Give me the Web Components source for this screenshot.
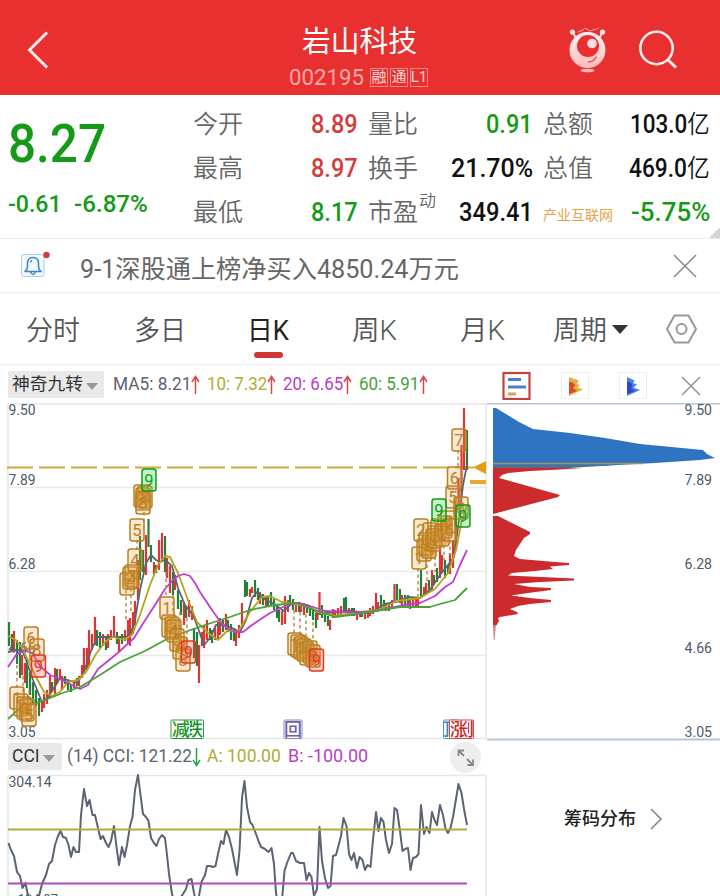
<!DOCTYPE html>
<html lang="zh-CN">
<head>
<meta charset="utf-8">
<title>岩山科技 002195</title>
<style>
  body {
    margin: 0;
    width: 720px;
    height: 896px;
    overflow: hidden;
    background: #fff;
    color: #666;
    font-family: Roboto, "Noto Sans CJK SC", sans-serif;
  }
</style>
</head>
<body>
<stock-page></stock-page>

<script>
class FitText extends HTMLElement {
  constructor() {
    super();
    this.attachShadow({ mode: "open" });
  }

  connectedCallback() {
    const width = Number(this.getAttribute("w"));
    this.shadowRoot.innerHTML = `
      <style>
        :host { display: block; width: ${width}px; white-space: nowrap; flex: none; }
        span { display: inline-block; transform-origin: 0 50%; }
      </style>
      <span><slot></slot></span>
    `;
    const span = this.shadowRoot.querySelector("span");
    span.style.transform = `scaleX(${width / span.offsetWidth})`;
  }
}
customElements.define("fit-text", FitText);

// Red title bar
class StockHeader extends HTMLElement {
  constructor() {
    super();
    this.attachShadow({ mode: "open" });
  }

  connectedCallback() {
    this.shadowRoot.innerHTML = `
      <style>
        :host {
          display: grid;
          grid-template-columns: 289px 139px 1fr;
          height: 95px;
          background: #e93030;
          color: #fff;
        }
        .back { padding: 30px 0 0 26px; }
        .title { padding-top: 21px; }
        .name { font-size: 29px; line-height: 42px; padding-left: 13px; }
        .code { display: flex; align-items: center; gap: 2px; height: 28px; font-size: 22.5px; color: #ffaaa6; }
        .code fit-text { margin-right: 4px; }
        .tag {
          box-sizing: border-box;
          width: 18px;
          height: 19px;
          border: 1px solid #f58a88;
          color: #ffd9d8;
          font-size: 15px;
          line-height: 17px;
          display: flex;
          justify-content: center;
        }
        .tools { display: flex; padding: 25px 0 0 140px; gap: 31px; }
        svg { display: block; fill: none; }
      </style>
      <div class="back">
        <svg width="24" height="40"><path d="M21 2.500L3.500 20L21 37.500" stroke="#ffecec" stroke-width="3"/></svg>
      </div>
      <div class="title">
        <div class="name"><fit-text w="115">岩山科技</fit-text></div>
        <div class="code">
          <fit-text w="75">002195</fit-text>
          <span class="tag">融</span><span class="tag">通</span><span class="tag">L1</span>
        </div>
      </div>
      <div class="tools">
        <svg width="40" height="49">
          <defs>
            <linearGradient id="ball" x1="0" y1="0" x2="0" y2="1">
              <stop offset="0" stop-color="#fff4f4"/><stop offset="1" stop-color="#ffb9bb"/>
            </linearGradient>
          </defs>
          <path d="M4.500 7L8.500 14M34.500 7L31 14" stroke="#ffdede" stroke-width="2"/>
          <circle cx="4.500" cy="7" r="2.600" fill="#ffe6e6"/><circle cx="34.500" cy="7" r="2.600" fill="#ffe6e6"/>
          <path d="M10 7L15 5L17 3L22 6L31 3" stroke="#ffaaaa"/>
          <circle cx="19.500" cy="25" r="18" fill="url(#ball)"/>
          <circle cx="20" cy="21" r="11" fill="#e93030"/>
          <circle cx="24" cy="18.500" r="4.800" fill="#ffdede"/>
          <path d="M20 37Q26 37 28.500 31.500" stroke="#e85050" stroke-width="1.300"/>
          <ellipse cx="19.500" cy="45.500" rx="7" ry="1.700" fill="#ffb8b8"/>
        </svg>
        <svg width="40" height="46">
          <circle cx="17.500" cy="23" r="16.200" stroke="#ffecec" stroke-width="2.600"/>
          <path d="M28.500 34.500L37 42.500" stroke="#ffecec" stroke-width="3"/>
        </svg>
      </div>
    `;
  }
}
customElements.define("stock-header", StockHeader);

// One label / value pair of the quote table
class QuoteItem extends HTMLElement {
  constructor() {
    super();
    this.attachShadow({ mode: "open" });
  }

  connectedCallback() {
    const sup = this.getAttribute("sup") || "";
    const small = this.hasAttribute("small");
    this.shadowRoot.innerHTML = `
      <style>
        :host { display: flex; justify-content: space-between; height: 44px; line-height: 44px; }
        .label { font-size: 25px; font-weight: 350; color: #666; white-space: nowrap; display: flex; }
        .label.small { font-size: 14px; font-weight: 400; color: #e8a048; padding-top: 2px; }
        sup { font-size: 17px; line-height: 20px; margin-left: 1px; }
        .value { font-size: 25px; font-weight: 500; color: ${this.getAttribute("color") || "#111"}; }
      </style>
      <div class="label ${small ? "small" : ""}">${this.getAttribute("label")}${sup ? `<sup>${sup}</sup>` : ""}</div>
      <fit-text class="value" w="${this.getAttribute("w")}"><slot></slot></fit-text>
    `;
  }
}
customElements.define("quote-item", QuoteItem);

class QuoteBoard extends HTMLElement {
  constructor() {
    super();
    this.attachShadow({ mode: "open" });
  }

  connectedCallback() {
    this.shadowRoot.innerHTML = `
      <style>
        :host {
          display: grid;
          grid-template-columns: 175px 165px 165px 167px;
          column-gap: 10px;
          box-sizing: border-box;
          height: 144px;
          padding: 7px 0 0 8px;
          border-bottom: 1px solid #e9e9e9;
          background: linear-gradient(135deg, transparent 50%, #d4d4d4 50%) 100% 100% / 11px 11px no-repeat;
        }
        .last { color: #159a18; font-weight: 500; }
        .price { font-size: 54px; line-height: 60px; padding-top: 12px; }
        .change { display: flex; gap: 12px; font-size: 23.5px; line-height: 30px; padding-top: 15px; }
        .column { padding-top: 1px; }
      </style>
      <div class="last">
        <div class="price"><fit-text w="98">8.27</fit-text></div>
        <div class="change"><fit-text w="54">-0.61</fit-text><fit-text w="74">-6.87%</fit-text></div>
      </div>
      <div class="column">
        <quote-item label="今开" w="47" color="#d43c3c">8.89</quote-item>
        <quote-item label="最高" w="47" color="#d43c3c">8.97</quote-item>
        <quote-item label="最低" w="47" color="#159a18">8.17</quote-item>
      </div>
      <div class="column">
        <quote-item label="量比" w="47" color="#159a18">0.91</quote-item>
        <quote-item label="换手" w="82">21.70%</quote-item>
        <quote-item label="市盈" sup="动" w="74">349.41</quote-item>
      </div>
      <div class="column">
        <quote-item label="总额" w="80">103.0<span style="font-weight:350">亿</span></quote-item>
        <quote-item label="总值" w="81">469.0<span style="font-weight:350">亿</span></quote-item>
        <quote-item label="产业互联网" small w="79" color="#159a18">-5.75%</quote-item>
      </div>
    `;
  }
}
customElements.define("quote-board", QuoteBoard);

// Dismissable news line
class NewsBar extends HTMLElement {
  constructor() {
    super();
    this.attachShadow({ mode: "open" });
  }

  connectedCallback() {
    this.shadowRoot.innerHTML = `
      <style>
        :host {
          display: flex;
          box-sizing: border-box;
          height: 54px;
          padding-left: 20px;
          align-items: center;
          border-bottom: 1px solid #eee;
          font-size: 25px;
        }
        svg { display: block; fill: none; flex: none; }
        fit-text { margin: 2px 214px 0 28px; color: #666; }
      </style>
      <svg width="32" height="30" viewBox="0 1 32 30">
        <rect x="1.500" y="4.500" width="22.500" height="22" rx="2.500" fill="#f3faff" stroke="#a9cfee"/>
        <path d="M5 21.500Q7.500 20 7.500 16V13.500Q7.500 7.500 13 7.500Q18.500 7.500 18.500 13.500V16Q18.500 20 21 21.500ZM10.500 22Q13 27 15.500 22M10.500 12.500Q11 10.500 12 10.500" stroke="#3d85c4" stroke-width="1.500" stroke-linejoin="round"/>
        <circle cx="26.500" cy="5" r="3.200" fill="#d63a3a"/>
      </svg>
      <fit-text w="379"><slot></slot></fit-text>
      <svg width="24" height="24"><path d="M1 1L23 23M23 1L1 23" stroke="#888" stroke-width="1.500"/></svg>
    `;
  }
}
customElements.define("news-bar", NewsBar);

class PeriodTabs extends HTMLElement {
  constructor() {
    super();
    this.attachShadow({ mode: "open" });
  }

  connectedCallback() {
    const tabs = [["分时", 54], ["多日", 52], ["日K", 42], ["周K", 45], ["月K", 45], ["周期", 54]];
    this.shadowRoot.innerHTML = `
      <style>
        :host {
          display: grid;
          grid-template-columns: 108px 113px 105px 108px 93px 113px 32px;
          box-sizing: border-box;
          height: 72px;
          padding-left: 26px;
          border-bottom: 1px solid #eee;
        }
        .tab { display: flex; gap: 5px; padding-top: 18px; font-size: 27px; line-height: 40px; font-weight: 350; color: #555; }
        .tab.on { flex-direction: column; gap: 0; color: #222; font-weight: 400; }
        .tab.on::after { content: ""; width: 29px; height: 6px; border-radius: 3px; margin: 1px 0 0 7px; background: #d23535; }
        .caret { border: 8px solid transparent; border-top: 9px solid #333; border-bottom: 0; height: 0; margin-top: 14px; }
        svg { display: block; fill: none; margin-top: 20px; }
      </style>
      ${tabs.map(([name, w]) => `
        <div class="tab ${name === "日K" ? "on" : ""}">
          <fit-text w="${w}">${name}</fit-text>${name === "周期" ? `<i class="caret"></i>` : ""}
        </div>`).join("")}
      <svg width="32" height="32" stroke="#999" stroke-width="2">
        <path d="M8.500 2.500H22.500L30 16L22.500 29.500H8.500L1 16Z" stroke-linejoin="round"/>
        <circle cx="15.500" cy="16" r="5"/>
      </svg>
    `;
  }
}
customElements.define("period-tabs", PeriodTabs);

// Indicator picker with the current readings next to it
class IndicatorBar extends HTMLElement {
  constructor() {
    super();
    this.attachShadow({ mode: "open" });
  }

  connectedCallback() {
    this.shadowRoot.innerHTML = `
      <style>
        :host { display: flex; align-items: flex-start; box-sizing: border-box; padding: 6px 0 0 8px; font-size: 17.500px; line-height: 27px; }
        .pick {
          display: flex;
          box-sizing: border-box;
          width: ${this.getAttribute("pick-width")}px;
          height: 27px;
          padding-left: 4px;
          gap: 3px;
          background: #e9e9e9;
          border-radius: 2px;
          color: #333;
          flex: none;
        }
        .pick i { border: 6px solid transparent; border-top: 7px solid #999; border-bottom: 0; height: 0; margin-top: 12px; }
        ::slotted(*) { flex: none; }
      </style>
      <div class="pick">
        <fit-text w="${this.getAttribute("name-width")}">${this.getAttribute("name")}</fit-text><i></i>
      </div>
      <slot></slot>
    `;
  }
}
customElements.define("indicator-bar", IndicatorBar);

// Up or down arrow behind a reading
class TrendArrow extends HTMLElement {
  constructor() {
    super();
    this.attachShadow({ mode: "open" });
  }

  connectedCallback() {
    const down = this.hasAttribute("down");
    this.shadowRoot.innerHTML = `
      <style>
        :host { display: block; width: 9px; height: 20px; padding-top: 4px; }
        svg { display: block; fill: none; transform: ${down ? "rotate(180deg)" : "none"}; }
      </style>
      <svg width="9" height="20" stroke="${down ? "#27a35c" : "#d44"}" stroke-width="1.500"><path d="M4.500 19V1.500M1 7L4.500 1.500L8 7"/></svg>
    `;
  }
}
customElements.define("trend-arrow", TrendArrow);

// x, top, bottom and direction (r = up, g = down) of each bar
const CANDLES = `
9 622 646 g,12 634 650 g,14 631 650 r,17 640 664 g,20 642 678 g,22 655 675 r,25 663 683 r,27 660 688 g,
30 672 695 g,33 682 704 g,36 690 706 g,39 698 716 g,42 702 712 r,44 694 708 r,47 690 704 r,50 676 698 r,
52 682 692 g,55 668 694 r,57 669 684 g,60 669 678 r,62 676 690 r,65 676 684 g,68 680 690 g,71 684 692 g,
74 680 688 r,77 678 686 g,79 676 686 r,82 665 678 r,84 648 674 r,87 648 670 r,89 630 666 r,92 634 650 r,
95 617 645 r,97 630 646 g,100 632 648 g,103 634 646 r,106 637 650 g,108 634 648 r,111 630 640 r,114 616 637 r,
117 632 644 g,119 638 652 r,122 634 644 g,125 630 641 r,128 620 644 r,130 618 646 r,133 612 634 r,135 601 626 r,
138 560 600 r,140 536 580 g,143 550 572 g,146 535 575 r,148.5 519 547 g,151 545 562 g,154 562 575 r,156 565 573 g,
159 540 570 r,162 533 562 r,165 536 572 g,167 558 578 r,170 566 593 r,173 572 595 g,175 575 590 r,178 590 609 g,
181 600 615 g,184 602 625 r,186 606 618 g,189 600 617 r,192 606 620 r,194 628 658 g,197 632 666 g,199 645 683 r,
202 632 646 r,204 625 648 r,207 620 640 r,210 628 640 g,212 630 643 g,215 628 640 r,218 622 640 r,220 618 635 r,
223 620 632 g,226 614 630 r,228 620 632 g,231 624 640 g,234 628 641 g,236 630 646 r,239 625 638 r,242 603 625 r,
245 580 597 g,247 582 596 g,250 589 597 r,252 587 593 r,255 580 597 g,258 588 600 g,260 592 604 r,263 594 605 g,
266 596 606 r,268 597 607 g,271 592 605 g,274 599 610 g,277 605 618 g,279 610 622 g,282 611 625 r,285 596 624 r,
288 600 612 r,290 595 606 g,293 599 610 g,296 603 612 r,299 602 612 g,301 604 612 r,304 603 615 r,307 604 613 g,
310 606 616 g,313 610 620 g,316 613 628 g,317.500 612 620 r,319.500 592 615 r,322 605 618 g,325 611 622 g,328 616 626 g,
330 620 630 r,333 609 618 r,335 610 618 r,338 608 616 r,341 606 615 r,344 598 612 g,346 597 612 g,349 608 614 r,
352 608 616 g,354 608 616 g,357 612 620 r,360 611 617 r,362 611 617 g,365 613 619 r,368 612 618 r,370 608 616 r,
373 606 614 r,376 593 610 r,378 602 610 r,381 595 608 g,384 600 608 g,386 603 611 r,389 603 611 g,392 600 608 r,
394.500 584 602 r,397 584 600 g,400 589 603 g,402 595 606 r,405 595 604 g,408 595 607 g,410 600 609 r,413 597 608 r,
416 597 606 r,418 597 606 r,421 570 596 g,424 587 596 r,426 583 594 r,429 580 592 g,432 570 590 r,434 575 585 g,
437 568 582 g,440 548 578 r,442 555 572 r,445 560 578 g,448 565 573 g,450 553 574 r,453 540 568 r,455.500 500 550 r,
458.500 478 510 r,461.500 445 492 r,464 408 470 r,467 430 470 g`;

const AVERAGES = [
  ["#5c6470", "8,652 17,650 22,650 26,660 33,680 42,702 48,697 54,688 60,678 68,680 77,683 84,672 92,648 98,637 103,637 112,637 122,637 130,636 135,620 140,590 146,563 151,555 156,560 160,562 165,560 172,566 178,588 185,605 193,615 198,628 204,645 210,638 216,625 224,625 232,628 240,632 246,620 252,598 257,592 266,600 274,604 284,611 292,603 300,603 310,608 320,614 335,612 350,611 370,613 385,604 400,601 408,597 420,598 430,590 440,575 448,565 454,557 459,520 463,485 467,465"],
  ["#b3a51e", "8,636 16,640 22,648 28,660 35,675 44,692 52,696 60,692 68,682 78,680 86,672 96,654 106,641 113,637 124,640 132,635 140,615 150,585 158,565 165,556 170,557 178,573 188,600 197,622 208,633 218,640 228,630 238,632 250,612 262,597 270,596 282,602 300,605 310,607 318,612 335,616 360,612 378,610 397,601 420,598 435,589 448,573 456,550 462,520 467,505"],
  ["#bf3fd0", "8,667 16,655 25,650 33,654 40,666 50,675 60,679 70,684 80,689 88,685 98,669 108,661 120,651 134,638 144,622 155,605 165,589 172,581 178,576 184,574 190,576 195,583 200,592 212,610 222,624 229,629 236,632 243,632 252,625 270,613 285,606 297,603 310,606 325,611 345,612 370,612 390,608 405,605 420,603 435,596 445,587 453,582 460,565 467,550"],
  ["#46a436", "8,719 20,708 40,702 60,694 80,687 100,675 120,662 145,651 167,639 185,632 205,625 230,617 250,610 275,605 295,603 315,610 335,617 350,615 375,611 400,607 430,607 440,604 455,600 467,588"]
];

// Centre and digit of each count mark; c picks the colour
const MARKS = [
  [31, 638, 6], [37, 650, 8], [17, 698, 1], [21, 705, 2], [24, 708, 3], [27, 710, 4], [29, 715, 5], [38.5, 666, 9, "red"],
  [137, 530, 5], [127, 584, 1], [130, 578, 2], [132, 576, 3], [135, 560, 4], [141, 496, 6], [143, 499, 7], [145, 497, 8], [143, 503, 8], [149, 480, 9, "green"],
  [167, 608, 1], [169, 626, 2], [172, 628, 3], [174, 631, 4], [177, 640, 5], [180, 648, 6], [183, 660, 8], [188.5, 652, 9, "red"],
  [295, 644, 1], [298, 646, 2], [301, 648, 3], [304, 650, 4], [307, 654, 5], [310, 652, 6], [313, 656, 8], [316.5, 660, 9, "red"],
  [419, 558, 1], [421, 530, 2], [424, 550, 2], [426, 544, 3], [429, 547, 4], [430, 534, 5], [433, 540, 6], [435, 537, 7],
  [438, 530, 8], [442, 535, 3], [445, 527, 4], [448, 522, 8], [449, 530, 6], [453, 497, 5], [454.5, 478, 6], [459, 440, 7],
  [461, 508, 8], [439, 510, 9, "green"], [463, 516, 9, "green"]
];

const MARK_COLORS = {
  tan: ["#b98022", "rgba(226,160,70,.25)"],
  red: ["#e2391f", "rgba(245,90,70,.28)"],
  green: ["#119a18", "rgba(60,215,75,.3)"]
};

// [x, y, width, height] of the patches where many marks pile up
const PILES = [
  [18, 700, 14, 16], [137, 489, 13, 16], [125, 570, 12, 16], [165, 619, 14, 16], [172, 636, 14, 14],
  [294, 638, 14, 16], [304, 644, 12, 18], [420, 540, 16, 18], [428, 528, 20, 18], [442, 518, 11, 16]
];

// [x, from, to] of the dotted stems
const STEMS = [
  [17, 665, 688], [23, 676, 696], [29, 690, 700], [126, 590, 622], [131, 588, 612], [137, 540, 550], [144, 512, 530],
  [166, 572, 597], [173, 595, 616], [180, 612, 636], [187, 618, 640], [294, 610, 634], [300, 612, 636], [306, 614, 640],
  [313, 622, 644], [418, 568, 598], [427, 558, 585], [435, 550, 572], [444, 545, 560], [450, 540, 555], [458, 450, 468]
];

class KlineChart extends HTMLElement {
  constructor() {
    super();
    this.attachShadow({ mode: "open" });
  }

  connectedCallback() {
    const candles = CANDLES.split(",").map(row => {
      const [x, top, bottom, dir] = row.trim().split(" ");
      return `<path d="M${x} ${top}V${bottom}" stroke="${dir === "r" ? "#e03434" : "#23803a"}"/>`;
    }).join("");
    const lines = AVERAGES.map(([color, points]) => `<polyline points="${points}" stroke="${color}"/>`).join("");
    const marks = MARKS.map(([x, y, digit, c = "tan"]) => {
      const [stroke, fill] = MARK_COLORS[c];
      return `<rect x="${x - 7}" y="${y - 11}" width="14" height="22" rx="2.500" fill="${fill}" stroke="${stroke}" stroke-width="1.500"/>
        <text x="${x}" y="${y + 6}" font-size="16.500" text-anchor="middle" fill="${stroke}">${digit}</text>`;
    }).join("");
    const piles = PILES.map(([x, y, w, h]) => `<rect x="${x}" y="${y}" width="${w}" height="${h}" rx="4"/>`).join("");
    const stems = STEMS.map(([x, from, to]) => `<path d="M${x} ${from}V${to}"/>`).join("");
    const scale = [["9.50", 415], ["7.89", 485], ["6.28", 569], ["4.66", 653], ["3.05", 737]];

    this.shadowRoot.innerHTML = `
      <style>
        :host { display: block; }
        svg { display: block; overflow: visible; }
        .axis { font-size: 14.500px; fill: #4b5b6b; }
        .event { font-size: 18px; font-weight: 500; }
      </style>
      <svg width="487" height="336" viewBox="0 403 487 336" fill="none">
        <path d="M8 487.500H486M8 571.500H486M8 655.500H486" stroke="#e9e9e9" stroke-width="1.500"/>
        <path d="M8 404H486M8 403V739M486 403V739M8 738.500H486" stroke="#e4e6e8" stroke-width="1.500"/>
        ${scale.map(([t, y]) => `<text class="axis" x="8.500" y="${y}" textLength="27" lengthAdjust="spacingAndGlyphs">${t}</text>`).join("")}
        <path d="M7 467.500H474" stroke="#d6a73c" stroke-width="2" stroke-dasharray="26 6"/>
        <g stroke-width="2.200">${candles}</g>
        <g stroke-width="1.800" stroke-linejoin="round">${lines}</g>
        <g stroke="#ba8c48" stroke-width="1.500" stroke-dasharray="3.500 3">${stems}</g>
        <g fill="#cf9a3c" fill-opacity=".65">${piles}</g>
        ${marks}
        <path d="M473 467.500L486 461V474Z" fill="#e69b12"/>
        <path d="M470 482H486" stroke="#e9a92a" stroke-width="4"/>
        <clipPath id="fall"><rect x="190" y="720" width="13" height="19"/></clipPath>
        <clipPath id="top"><rect x="444" y="720" width="5" height="19"/></clipPath>
        <clipPath id="rise"><rect x="468" y="720" width="5.500" height="19"/></clipPath>
        <rect x="171" y="720" width="32.500" height="18.500" rx="1" fill="#fff" stroke="#2a9a3a"/>
        <text class="event" x="172" y="736" fill="#189322">减</text>
        <text class="event" x="185" y="736" fill="#189322" clip-path="url(#fall)">跌</text>
        <rect x="284" y="720" width="18" height="18.500" rx="1" fill="#fff" stroke="#8d84ba"/>
        <text class="event" x="284" y="736" fill="#6b60a5">回</text>
        <rect x="443.500" y="720" width="15" height="18.500" rx="1" fill="#fff" stroke="#5794cc"/>
        <text class="event" x="443" y="736" fill="#3c83c4" clip-path="url(#top)">顶</text>
        <rect x="449.500" y="720" width="24" height="18.500" rx="1" fill="#fff" stroke="#d34a4a"/>
        <text class="event" x="450" y="736" fill="#cf2525">涨</text>
        <text class="event" x="456" y="736" fill="#cf2525" clip-path="url(#rise)">到</text>
      </svg>
    `;
  }
}
customElements.define("kline-chart", KlineChart);

class CciChart extends HTMLElement {
  constructor() {
    super();
    this.attachShadow({ mode: "open" });
  }

  connectedCallback() {
    const points = `8.500,843 11,850 14,856 17,872 20,876 22.500,888 25.500,883 28,896 32,905 38,900 42,884 46,875 49,864 52,861 55,845
      58,836 60.500,831 63,837 66,838 68.500,845 71,857 73.500,847 76,852 79,852 81,815 84,789 87,806 89.500,800 92.500,815 95,815
      98,828 100.500,839 103,836 106,843 108.500,847 111,841 114,826 116.500,847 119,865 122,847 124.500,857 127,845 130,826 132.500,817
      135,790 138,775 140,791 143,814 146,817 148.500,821 151,838 154,843 156.500,846 159,839 162,835 165,838 167,855 169,874 172,894
      175,906 179,900 183,894 186,889 188.500,880 191.500,879 194,893 197,906 199,896 201.500,882 205,875 207,866 210,866 213,867 215.500,866
      218,854 221,841 223.500,844 226,830 229,837 232,849 234.500,862 237,875 239.500,851 242,798 244.500,781 247,807 250,822 252.500,825
      256,834 258.500,841 261,847 265,849 268.500,852 271.500,848 274,864 276,893 278,906 282,900 284.500,871 287,863 291,853 293,853
      296,861 300,863 304,863 306.500,880 309,873 311.500,877 314,896 317,889 319.500,827 322,861 325,878 328,888 330.500,886 333,856
      336,855 341,836 343.500,818 346.500,826 349,854 351.500,860 354,853 357,868 359.500,857 362.500,860 365,870 367.500,865 370.500,867
      373,840 376,812 378.500,831 381,818 383.500,822 386,840 389,853 392,844 394.500,808 397,810 400,831 402.500,851 405,849 408,848
      410.500,870 413,858 416,857 418.500,854 421,805 424,834 426.500,827 429.500,833 432,812 434.500,820 437,825 440,805 443,815
      445.500,829 448,833 450.500,828 453,817 456,799 458.500,784 461.500,793 464,809 467,825`;
    this.shadowRoot.innerHTML = `
      <style>
        :host { display: block; }
        svg { display: block; }
        text { font-size: 14.500px; fill: #4b5b6b; }
      </style>
      <svg width="487" height="122" viewBox="0 774 487 122" fill="none">
        <path d="M8 775.500H486M8 775V896M486 775V896" stroke="#e4e6e8" stroke-width="1.500"/>
        <text x="8.500" y="787" textLength="43" lengthAdjust="spacingAndGlyphs">304.14</text>
        <text x="14" y="905" textLength="44" lengthAdjust="spacingAndGlyphs">-194.27</text>
        <polyline points="${points}" stroke="#5a6472" stroke-width="2" stroke-linejoin="round"/>
        <path d="M8 829.500H467" stroke="#b5ab3b" stroke-width="2"/>
        <path d="M8 883.500H467" stroke="#b04bbf" stroke-width="2"/>
      </svg>
    `;
  }
}
customElements.define("cci-chart", CciChart);

// Chip distribution pane to the right of the candles
class ChipPane extends HTMLElement {
  constructor() {
    super();
    this.attachShadow({ mode: "open" });
  }

  connectedCallback() {
    const scale = [["9.50", 415], ["7.89", 485], ["6.28", 569], ["4.66", 653], ["3.05", 737]];
    this.shadowRoot.innerHTML = `
      <style>
        :host { display: block; }
        .tools { display: flex; height: 38px; box-sizing: border-box; padding: 6px 0 0 15px; }
        .tools svg:nth-child(-n+2) { margin-right: 30px; }
        .tools svg:last-child { margin: 5px 0 0 34px; }
        svg { display: block; fill: none; }
        text { font-size: 14.500px; fill: #4b5b6b; }
        .more { display: flex; align-items: center; gap: 13px; padding: 63px 0 0 77px; font-size: 18px; font-weight: 500; line-height: 30px; color: #222; }
      </style>
      <div class="tools">
        <svg width="29" height="29">
          <rect x="1.500" y="2" width="26" height="26" stroke="#c93e3e" stroke-width="2.200" fill="#fff"/>
          <path d="M6 8.500H19M6 16H24" stroke="#4b80c8" stroke-width="3.200"/><path d="M6 23H14" stroke="#dda052" stroke-width="3"/>
        </svg>
        <svg width="28" height="29">
          <rect x=".5" y="1.500" width="27" height="26" stroke="#eee" fill="#fff"/>
          <path d="M8 6L18 9.500L16 13L19 14L16.500 16.500L22 18.500L8 25Z" fill="#e8ad47"/><path d="M8 11H11L14.500 14L12 17L16 20L8 23Z" fill="#d64e25"/>
        </svg>
        <svg width="28" height="29">
          <rect x=".5" y="1.500" width="27" height="26" stroke="#eee" fill="#fff"/>
          <path d="M8 6L15.500 9.500L14 12L18 13.500L14.500 16.500L21 19L8 25Z" fill="#4485e0"/><path d="M8 11H11L13.500 14L12 17L16 20L8 23Z" fill="#3443ce"/>
        </svg>
        <svg width="20" height="20"><path d="M1 1L19 19M19 1L1 19" stroke="#888" stroke-width="1.300"/></svg>
      </div>
      <svg width="233" height="338" viewBox="487 403 233 338">
        <path d="M487 403.500H720M487 739.500H720" stroke="#b9c6d8" stroke-width="2"/>
        <path d="M493 408H496L519 422L533 429L570 433L605 438L640 444L703 450L707 454L715 458L700 460L655 463L600 466L493 468Z" fill="#2f74c3"/>
        <path d="M493 463.500H643" stroke="#9a9468" stroke-width="1.500"/>
        <path d="M493 465H615L570 468H493Z" fill="#526d8d"/>
        <path d="M493 468H582L560 469.500L530 471L508 473L502 475L499 478L560 495L558 497L493 514ZM493 516H498L530 532V534L524 538L516 550L514 556L520 559L555 562L569 563V565L550 566.500L553 569L535 571L512 573L508 575.500L574 578.500V580.500L540 582L514 584L530 587L551 588V590L528 593L511 595.500L530 598L551 600V602L530 604L518 606L510 609L517 612L518 614L500 617L498 618L499 621L496 626H493Z" fill="#cc2b2d"/>
        <path d="M493 625H496L494.500 640H493.800Z" fill="#d98080"/>
        ${scale.map(([t, y]) => `<text x="684.500" y="${y}" textLength="27.500" lengthAdjust="spacingAndGlyphs">${t}</text>`).join("")}
      </svg>
      <div class="more">
        <fit-text w="72">筹码分布</fit-text>
        <svg width="14" height="24"><path d="M2 2L12 12L2 22" stroke="#888" stroke-width="1.700"/></svg>
      </div>
    `;
  }
}
customElements.define("chip-pane", ChipPane);

class StockPage extends HTMLElement {
  constructor() {
    super();
    this.attachShadow({ mode: "open" });
  }

  connectedCallback() {
    this.shadowRoot.innerHTML = `
      <style>
        :host { display: block; }
        .charts { display: grid; grid-template-columns: 487px 233px; }
        .ma { height: 38px; color: #5c6470; }
        .cci { height: 35px; padding-top: 4px; color: #5c6470; }
        .expand { width: 31px; height: 31px; margin: -1px 0 0 82px; }
        svg { display: block; fill: none; }
      </style>
      <stock-header></stock-header>
      <quote-board></quote-board>
      <news-bar>9-1深股通上榜净买入4850.24万元</news-bar>
      <period-tabs></period-tabs>
      <div class="charts">
        <div>
          <indicator-bar class="ma" name="神奇九转" name-width="71" pick-width="96">
            <fit-text w="78" style="margin-left:9px">MA5: 8.21</fit-text><trend-arrow></trend-arrow>
            <fit-text w="60" style="margin-left:7px;color:#b3aa32">10: 7.32</fit-text><trend-arrow></trend-arrow>
            <fit-text w="60" style="margin-left:7px;color:#b83ec8">20: 6.65</fit-text><trend-arrow></trend-arrow>
            <fit-text w="60" style="margin-left:7px;color:#46a03a">60: 5.91</fit-text><trend-arrow></trend-arrow>
          </indicator-bar>
          <kline-chart></kline-chart>
          <indicator-bar class="cci" name="CCI" name-width="28" pick-width="54">
            <fit-text w="125" style="margin-left:5px">(14) CCI: 121.22</fit-text><trend-arrow down></trend-arrow>
            <fit-text w="74" style="margin-left:6px;color:#b3aa32">A: 100.00</fit-text>
            <fit-text w="80" style="margin-left:7px;color:#b83ec8">B: -100.00</fit-text>
            <svg class="expand" viewBox="0 0 31 31">
              <circle cx="15.500" cy="15.500" r="15.500" fill="#eee"/>
              <path d="M8.500 14V8.500H14M8.500 8.500L14 14M17 17L23 23M23 17.500V23H17.500" stroke="#888" stroke-width="1.800"/>
            </svg>
          </indicator-bar>
          <cci-chart></cci-chart>
        </div>
        <chip-pane></chip-pane>
      </div>
    `;
  }
}
customElements.define("stock-page", StockPage);
</script>
</body>
</html>
